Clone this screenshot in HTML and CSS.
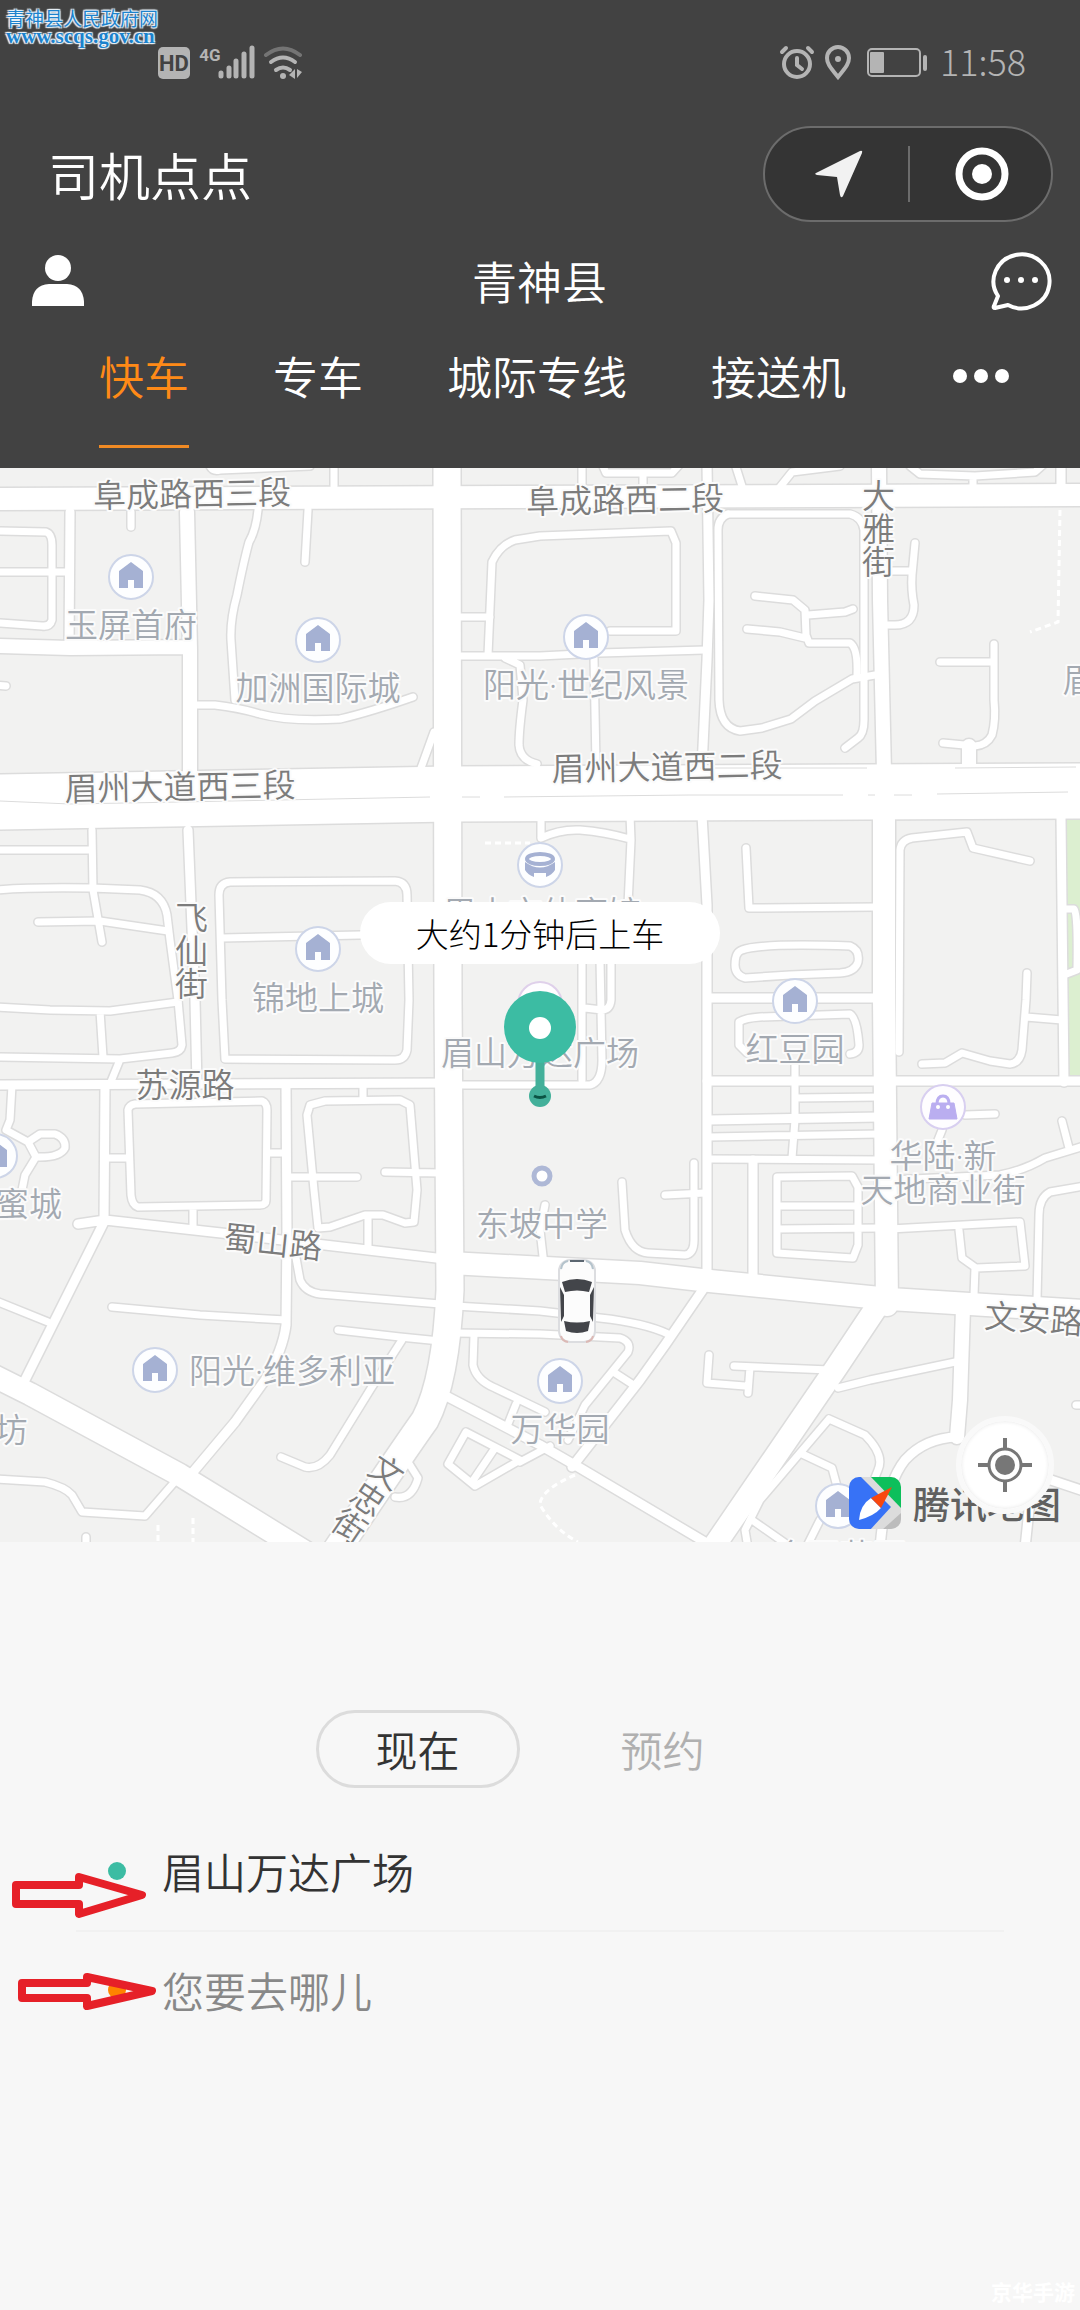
FILE: index.html
```html
<!DOCTYPE html>
<html lang="zh-CN">
<head>
   <meta charset="UTF-8">
   <title>司机点点</title>
   <meta name="viewport" content="width=device-width, initial-scale=1.0">
   <link rel="stylesheet" href="styles.css">
</head>
<body>
   <div class="site-mark">
      <span>青神县人民政府网</span>
      <span class="site-url">www.scqs.gov.cn</span>
   </div>

   <header class="header">
      <div class="status-bar">
         <svg class="status-left" viewBox="0 0 150 36">
            <rect x="2" y="3" width="32" height="32" rx="5" fill="#b4b4b4"/>
            <text class="hd-text" x="18" y="27">HD</text>
            <text class="net-text" x="54" y="17">4G</text>
            <g stroke="#b4b4b4" stroke-width="5" stroke-linecap="round">
               <path d="M65 29v3M73 24v8M80 17v15M88 10v22M96 4v28"/>
            </g>
            <g fill="none" stroke-width="4" stroke-linecap="round">
               <path d="M110 11q17-13 34 0" stroke="#747474"/>
               <path d="M115 18q12-9 24 0M120 26q7-5 14 0" stroke="#b4b4b4"/>
            </g>
            <circle cx="127" cy="32" r="3" fill="#b4b4b4"/>
            <path d="M133 31l6-6v10zM141 25l5 3-5 6z" fill="#b4b4b4"/>
         </svg>
         <div class="status-right">
            <svg class="status-icons" viewBox="0 0 152 36">
               <g fill="none" stroke="#b4b4b4" stroke-linecap="round">
                  <circle cx="19" cy="20" r="13" stroke-width="4"/>
                  <path d="M19 14v7l5 4M4 8l4-4M30 4l4 4" stroke-width="4"/>
                  <path d="M60 33C51 22 49 19 49 14a11 11 0 0 1 22 0c0 5-2 8-11 19z" stroke-width="4"/>
                  <rect x="90" y="5" width="52" height="27" rx="4" stroke-width="2"/>
                  <path d="M147 13v12" stroke-width="4"/>
               </g>
               <circle cx="60" cy="15" r="3" fill="#b4b4b4"/>
               <rect x="92" y="8" width="14" height="21" rx="1" fill="#b4b4b4"/>
            </svg>
            <span class="clock">11:58</span>
         </div>
      </div>

      <div class="title-bar">
         <h1>司机点点</h1>
         <div class="capsule">
            <button type="button" aria-label="导航">
               <svg width="50" height="50" viewBox="0 0 50 50">
                  <path d="M2 24L46 2q3-1 2 2L29 47q-2 3-3-1l-3-18-20-2q-3-1-1-2z" fill="#f2f2f2"/>
               </svg>
            </button>
            <button type="button" aria-label="关闭">
               <svg width="54" height="54" viewBox="0 0 54 54">
                  <circle cx="27" cy="27" r="23" fill="none" stroke="#fff" stroke-width="7"/>
                  <circle cx="27" cy="27" r="10" fill="#fff"/>
               </svg>
            </button>
         </div>
      </div>

      <div class="city-bar">
         <button type="button" aria-label="我的">
            <svg width="52" height="52" viewBox="0 0 52 52">
               <circle cx="26" cy="13" r="13" fill="#fff"/>
               <path d="M0 51q-1-21 17-22h18q18 1 17 22z" fill="#fff"/>
            </svg>
         </button>
         <h2>青神县</h2>
         <button type="button" aria-label="消息">
            <svg width="62" height="62" viewBox="0 0 62 62">
               <path d="M8 46A28 27 0 1 1 18 55L5 58q-2 0-1-2z" fill="none" stroke="#fff" stroke-width="4" stroke-linejoin="round"/>
               <g fill="#fff"><circle cx="17" cy="30" r="3"/><circle cx="31" cy="30" r="3"/><circle cx="45" cy="30" r="3"/></g>
            </svg>
         </button>
      </div>

      <nav class="tabs">
         <button type="button" class="tab active">快车</button>
         <button type="button" class="tab">专车</button>
         <button type="button" class="tab">城际专线</button>
         <button type="button" class="tab">接送机</button>
         <button type="button" class="tab more" aria-label="更多">
            <svg width="58" height="16" viewBox="0 0 58 16" fill="#fff">
               <circle cx="8" cy="8" r="7"/><circle cx="29" cy="8" r="7"/><circle cx="50" cy="8" r="7"/>
            </svg>
         </button>
      </nav>
   </header>

   <main>
      <section class="map">
         <svg class="map-canvas" viewBox="0 468 1080 1074">
            <defs>
               <g id="roads">
                  <!-- lanes and estate roads -->
                  <g class="lane">
                     <path d="M0 531L46 532Q52 534 52 545V620Q50 627 42 626L0 623M0 572H67M131 512V527M-4 685L6 686"/>
                     <path d="M258 510Q256 530 249 542Q244 560 237 595Q230 620 231 640L235 700M308 510L305 562"/>
                     <path d="M197 705L215 705Q240 708 260 714Q290 722 340 719Q370 712 413 697M434 732L421 768"/>
                     <path d="M209 464Q212 472 220 470L310 466M334 468V486"/>
                     <path d="M540 536L515 540Q500 545 492 562L488 655M540 536L671 531L676 543V631H610M461 617H490"/>
                     <path d="M461 656H540L600 653L705 650M505 658L520 665L523 700Q519 730 519 745Q520 760 537 764M594 658L596 765"/>
                     <path d="M728 514H850Q862 517 864 530V720Q864 734 858 738L845 748"/>
                     <path d="M728 514Q718 518 718 530L719 700Q720 728 740 731L762 728L791 719L815 701L852 679L875 675"/>
                     <path d="M755 596L793 600L805 610L806 635L809 643H850Q858 648 857 675M747 629L780 632L805 638M808 615L845 612L853 609"/>
                     <path d="M915 543L912 575Q911 590 914 605Q914 625 895 625H885M888 571H912"/>
                     <path d="M994 644V700Q996 720 992 735Q987 745 975 746L943 743M940 662H994"/>
                     <path d="M582 464V486M602 464L606 473H672L680 464M643 473V487M735 464L742 486M780 487L792 472L840 466"/>
                     <path d="M910 466L920 474L975 476L1035 472L1044 464M973 476V487"/>
                     <path d="M630 815L631 840L628 905M541 838Q560 829 580 830Q605 832 630 839M541 838V818"/>
                     <path d="M746 848L749 908L876 907"/>
                     <path d="M742 950Q760 943 850 946Q860 950 858 962Q855 972 840 973L790 975L745 978Q735 975 735 965Q735 952 742 950z"/>
                     <path d="M747 1053L739 1045V1022Q745 1018 760 1017L850 1014Q857 1018 859 1045Q859 1053 850 1054"/>
                     <path d="M899 1052L900 850Q901 840 912 838L967 832L973 848L1030 861"/>
                     <path d="M1027 973L1026 1000L1022 1050Q1020 1063 1010 1064L990 1061L962 1053L945 1063L922 1064M1026 1017L1062 1020"/>
                     <path d="M1064 909H1074Q1078 912 1077 970L1064 975"/>
                     <path d="M461 1085H590Q602 1082 602 1060L600 960M582 960V1080M611 960V1000Q610 1010 602 1010L585 1008"/>
                     <path d="M795 1098L880 1097M709 1137L880 1134M795 1065V1120L792 1158M709 1159L880 1160"/>
                     <path d="M777 1177L852 1176L858 1187V1245L853 1258L777 1253zM777 1206H858M777 1229L880 1228"/>
                     <path d="M890 1229L1020 1222L1025 1266L976 1268L962 1258L959 1230M975 1268L974 1295"/>
                     <path d="M1084 1186L1050 1192Q1039 1198 1039 1215L1037 1300"/>
                     <path d="M890 1180L1000 1175Q1025 1170 1045 1158L1084 1146M1062 1121L1069 1148M942 1130L932 1155M965 1115L995 1114"/>
                     <path d="M622 1182L625 1230Q632 1252 648 1253L685 1255Q694 1254 694 1240V1163M665 1195L705 1193"/>
                     <path d="M545 1205L540 1230L544 1265"/>
                     <path d="M92 830L93 890L102 942M0 850H92M-4 890Q30 887 92 888L140 890Q163 893 167 915L170 940L178 1000L182 1045Q181 1052 172 1053L120 1059L-4 1057"/>
                     <path d="M38 922L100 921L168 931M-4 1007L50 1010L110 1011L178 1002M100 1011L103 1057M119 1062L110 1084"/>
                     <path d="M222 1000L219 895Q219 883 230 882L395 881Q407 882 407 895L409 1000L407 1050Q405 1060 395 1060L225 1059zM222 938L407 934"/>
                     <path d="M128 1110Q129 1105 135 1104L262 1101Q267 1103 267 1110L266 1200Q266 1205 260 1205L138 1207Q132 1205 131 1195zM106 1158H128M268 1153H286M193 1207V1230"/>
                     <path d="M310 1105L325 1101L400 1100L410 1105L417 1190L414 1222L405 1223L383 1215L365 1215L330 1227L318 1228L314 1190L307 1115zM287 1177H357M385 1172L440 1173M363 1085V1100M368 1216V1250"/>
                     <path d="M296 1244V1258L300 1280Q305 1292 320 1294L440 1304M112 1307L200 1315L286 1320M338 1330L400 1337L440 1341"/>
                     <path d="M402 1340L370 1390L330 1455Q318 1470 305 1467L281 1457M408 1462L418 1478Q412 1500 395 1497"/>
                     <path d="M-4 1479L45 1482Q65 1487 72 1495L82 1512L145 1516L178 1478M86 1537V1548M-4 1301L48 1322"/>
                     <path d="M12 1085L10 1120L6 1130L28 1142L40 1134L55 1134Q66 1138 65 1148Q60 1158 36 1157L28 1142M36 1157L25 1175L22 1190"/>
                     <path d="M455 1306L540 1311L600 1318Q645 1323 668 1334M455 1333L540 1334L620 1338Q632 1342 628 1352L585 1405L568 1440"/>
                     <path d="M474 1335L473 1365Q476 1380 495 1388L545 1412M615 1373L635 1386M508 1424L516 1404"/>
                     <path d="M448 1464L466 1432L520 1460L475 1486zM495 1448L472 1482M520 1462L550 1446"/>
                     <path d="M838 1388L870 1380L960 1361M709 1355L707 1383L745 1386M734 1366L830 1370M750 1367L748 1393"/>
                     <path d="M829 1419L760 1500L745 1530L748 1548M829 1419L865 1435Q885 1455 878 1470L870 1490M800 1453L832 1468L838 1490M752 1520L792 1548M820 1520L806 1548M1076 1405H1090"/>
                  </g>
                  <!-- side streets -->
                  <g class="street">
                     <path d="M70 512L69 646M707 464L709 600L707 660L702 768M188 830L191 904L195 1000L197 1085"/>
                     <path d="M702 815L707 905L707 1000V1285M709 998H880M1061 464V490M1061 818L1064 1082"/>
                     <path d="M-4 1085L450 1083M707 1081H1084M709 1120L880 1117M753 1160V1278"/>
                     <path d="M105 1085L104 1222M78 1224L105 1220L230 1234L445 1259M104 1222L80 1270L22 1386"/>
                     <path d="M286 1085L287 1235L286 1325Q283 1350 265 1380L235 1422L188 1478"/>
                     <path d="M706 1285L665 1345L640 1380L572 1467M448 1397L540 1445L580 1468L715 1548"/>
                     <path d="M957 1437Q925 1438 905 1460Q885 1485 880 1548M1030 1500L1025 1548M1045 1478L1084 1491"/>
                  </g>
                  <g class="avenue">
                     <path d="M187 512L190 650V775M-4 646L70 648L190 647M879 464L880 600L884 772M963 1308L960 1400L957 1437M969 746V770"/>
                  </g>
                  <g class="trunk">
                     <path d="M-4 499L1084 495M884 820V1000L887 1305M450 1263L640 1273L710 1281L890 1299L1084 1311"/>
                     <path d="M-10 1374L30 1394L180 1475L310 1555M878 1305L836 1368L708 1555"/>
                  </g>
                  <path class="artery" d="M447 464L448 1000L450 1290Q446 1380 425 1420Q400 1455 330 1560"/>
                  <path class="highway" d="M-4 802L450 794L1084 791"/>
               </g>
               <g id="home">
                  <circle r="22" fill="#fdfeff" stroke="#cdd5e8" stroke-width="2"/>
                  <path d="M-12 11V-6L0-15L12-6V11H3V3H-3V11z" fill="#a5b1d3"/>
               </g>
            </defs>

            <rect class="land" y="468" width="1080" height="1074"/>
            <rect class="park" x="1066" y="820" width="14" height="258"/>
            <use href="#roads" class="road-edge"/>
            <use href="#roads" class="road-body"/>
            <path class="median" d="M0 801L70 804L180 802L430 797M462 797H480M504 797L690 795L843 795M868 795H875M894 795H912M937 794L1068 792M700 768H867M955 768L1076 767"/>
            <path class="footpath" d="M1060 510L1058 622L1030 632M485 843H530M575 1475Q540 1490 540 1505Q555 1530 578 1542M158 1525V1542M193 1518V1542"/>

            <g class="road-name">
               <text x="192" y="506" transform="rotate(-1 192 494)">阜成路西三段</text>
               <text x="625" y="512" transform="rotate(-1 625 500)">阜成路西二段</text>
               <text class="upright" x="877" y="528">大雅街</text>
               <text x="180" y="799" transform="rotate(-1 180 787)">眉州大道西三段</text>
               <text x="667" y="779" transform="rotate(-1 667 767)">眉州大道西二段</text>
               <text class="upright" x="190" y="950">飞仙街</text>
               <text x="185" y="1097">苏源路</text>
               <text x="273" y="1254" transform="rotate(6 273 1242)">蜀山路</text>
               <text x="1034" y="1331" transform="rotate(4 1034 1319)">文安路</text>
               <text class="upright" x="367" y="1498" transform="rotate(34 367 1498)">文忠街</text>
            </g>
            <g class="place-name">
               <text x="131" y="637">玉屏首府</text>
               <text x="318" y="700">加洲国际城</text>
               <text x="586" y="697">阳光·世纪风景</text>
               <text x="1079" y="692">眉</text>
               <text x="542" y="925">眉山市体育馆</text>
               <text x="318" y="1010">锦地上城</text>
               <text x="540" y="1065">眉山万达广场</text>
               <text x="795" y="1061">红豆园</text>
               <text x="943" y="1168">华陆·新</text>
               <text x="943" y="1202">天地商业街</text>
               <text x="29" y="1216">蜜城</text>
               <text x="542" y="1236">东坡中学</text>
               <text x="292" y="1383">阳光·维多利亚</text>
               <text x="560" y="1441">万华园</text>
               <text x="11" y="1442">坊</text>
               <text x="840" y="1568">金玉花园</text>
            </g>

            <use href="#home" x="131" y="577"/>
            <use href="#home" x="318" y="640"/>
            <use href="#home" x="586" y="637"/>
            <use href="#home" x="318" y="949"/>
            <use href="#home" x="795" y="1001"/>
            <use href="#home" x="-5" y="1156"/>
            <use href="#home" x="155" y="1370"/>
            <use href="#home" x="560" y="1381"/>
            <use href="#home" x="838" y="1506"/>

            <!-- stadium -->
            <g transform="translate(540 865)">
               <circle r="22" fill="#fdfeff" stroke="#cdd5e8" stroke-width="2"/>
               <ellipse cy="-6" rx="13" ry="5" fill="none" stroke="#a5b1d3" stroke-width="4"/>
               <path d="M-15-3Q0 8 15-3V5Q12 10 6 12V8H-6V12Q-12 10-15 5z" fill="#a5b1d3"/>
            </g>
            <!-- mall -->
            <g transform="translate(943 1107)">
               <circle r="22" fill="#fefdff" stroke="#d8cff0" stroke-width="2"/>
               <path d="M-11-4H11L14 12H-14z" fill="#baaef0" stroke="#baaef0" stroke-linejoin="round"/>
               <path d="M-6-3Q-6-11 0-11Q6-11 6-3" fill="none" stroke="#baaef0" stroke-width="3"/>
               <circle cx="-5" cy="0" r="2" fill="#fff"/><circle cx="5" cy="0" r="2" fill="#fff"/>
            </g>
            <circle cx="542" cy="1176" r="8" fill="#fff" stroke="#aeb8d6" stroke-width="5"/>

            <!-- pickup pin -->
            <circle cx="540" cy="1004" r="22" fill="#fefdff" stroke="#dfd0ea" stroke-width="2"/>
            <circle cx="540" cy="1096" r="11" fill="#43b09a"/>
            <path d="M540 1055V1092" stroke="#43b09a" stroke-width="9"/>
            <circle cx="540" cy="1027" r="36" fill="#3cbca3"/>
            <circle cx="540" cy="1028" r="11" fill="#fff"/>
            <path d="M534 1096Q540 1099 546 1096" fill="none" stroke="#0b5444" stroke-width="3"/>

            <!-- car -->
            <g transform="translate(558 1259)">
               <rect x="1" y="1" width="36" height="82" rx="11" fill="#fcfcfc" stroke="#dcdde0" stroke-width="2"/>
               <path d="M12 2H26" stroke="#5b6670" stroke-width="2"/>
               <path d="M3 10Q4 3 10 2M35 10Q34 3 28 2" fill="none" stroke="#b4c3cc" stroke-width="2"/>
               <path d="M3 77Q4 82 10 83M35 77Q34 82 28 83" fill="none" stroke="#dcb9b5" stroke-width="2"/>
               <path d="M4 23Q19 17 34 23L31 33Q19 30 7 33zM6 62Q19 65 32 62L30 72Q19 76 8 72zM2 28L6 36V57L3 63zM36 28L32 36V57L35 63z" fill="#43454a"/>
            </g>
         </svg>

         <div class="callout">大约1分钟后上车</div>

         <div class="map-brand">
            <svg width="54" height="54" viewBox="0 0 54 54">
               <clipPath id="brand-clip"><rect x="1" y="1" width="52" height="52" rx="10"/></clipPath>
               <g clip-path="url(#brand-clip)">
                  <rect width="54" height="54" fill="#dcdcdc"/>
                  <path d="M22 0H54V33z" fill="#0dbf5b"/>
                  <path d="M0 0H12L43 31L22 54H0z" fill="#3772f6"/>
                  <path d="M54 36L34 54H54z" fill="#bcbcbc"/>
               </g>
               <path d="M11 44Q12 29 23 22L33 32Q26 40 11 44z" fill="#fff"/>
               <path d="M44 11L23 22L33 32z" fill="#f8480f"/>
            </svg>
            <span>腾讯地图</span>
         </div>

         <button type="button" class="locate" aria-label="定位">
            <svg width="54" height="54" viewBox="0 0 54 54">
               <circle cx="27" cy="27" r="16" fill="none" stroke="#777" stroke-width="3"/>
               <circle cx="27" cy="27" r="10" fill="#777"/>
               <path d="M27 0V11M27 43V54M0 27H11M43 27H54" stroke="#777" stroke-width="4"/>
            </svg>
         </button>
      </section>

      <form class="trip">
         <div class="when">
            <button type="button" class="when-btn active">现在</button>
            <button type="button" class="when-btn">预约</button>
         </div>
         <div class="trip-row">
            <label class="dot dot-from" for="from" aria-label="上车地点"></label>
            <input type="text" id="from" value="眉山万达广场">
            <svg class="pointer" viewBox="0 0 160 60">
               <path d="M16 44H79V36L142 54L79 73V63H16z"/>
            </svg>
         </div>
         <div class="trip-row">
            <label class="dot dot-to" for="to" aria-label="目的地"></label>
            <input type="text" id="to" placeholder="您要去哪儿">
            <svg class="pointer" viewBox="0 0 160 60">
               <path d="M22 23H87V17L152 31L87 46V38H22z"/>
            </svg>
         </div>
      </form>
   </main>

   <footer class="footer">京华手游</footer>
</body>
</html>
```

FILE: styles.css
```css
* {
   box-sizing: border-box;
}

body {
   margin: 0;
   min-height: 100vh;
   display: flex;
   flex-direction: column;
   background-color: #f7f7f7;
   color: #333;
   font-family: "Noto Sans CJK SC", sans-serif;
   font-weight: 350;
}

button {
   padding: 0;
   border: none;
   background: none;
   color: inherit;
   font: inherit;
   cursor: pointer;
}

svg {
   display: block;
}

h1, h2 {
   margin: 0;
   font-weight: 350;
}

/* site stamp over the top corner */
.site-mark {
   position: absolute;
   top: 8px;
   left: 6px;
   display: flex;
   flex-direction: column;
   color: #1c82cc;
   font-size: 19px;
   font-weight: 400;
   line-height: 20px;
   text-shadow: 0 0 2px #fff, 1px 1px 1px #e4f0f8, -1px -1px 1px #e4f0f8, 1px -1px 1px #e4f0f8, -1px 1px 1px #e4f0f8;
}

.site-url {
   font-family: "Liberation Serif", serif;
   font-size: 21px;
   font-weight: 700;
   line-height: 16px;
}

/* header */
.header {
   background-color: #424242;
   color: #fff;
   padding-top: 44px;
}

.status-bar {
   display: flex;
   justify-content: space-between;
   align-items: center;
   height: 36px;
   padding: 0 54px 0 156px;
   color: #b4b4b4;
}

.status-left {
   width: 150px;
   height: 36px;
}

.hd-text {
   font: 700 22px Roboto, sans-serif;
   fill: #424242;
   text-anchor: middle;
}

.net-text {
   font: 700 17px Roboto, sans-serif;
   fill: #b4b4b4;
   text-anchor: middle;
}

.status-right {
   display: flex;
   align-items: center;
   gap: 10px;
}

.status-icons {
   width: 152px;
   height: 36px;
}

.clock {
   padding-bottom: 4px;
   font-size: 36px;
   font-weight: 300;
   line-height: 36px;
}

.title-bar {
   display: flex;
   justify-content: space-between;
   align-items: center;
   margin-top: 46px;
   padding: 0 27px 0 48px;
}

h1 {
   font-size: 51px;
   line-height: 60px;
}

.capsule {
   display: flex;
   width: 290px;
   height: 96px;
   border: 2px solid #6c6c6c;
   border-radius: 48px;
   background-color: #343434;
}

.capsule button {
   display: flex;
   flex: 1;
   align-items: center;
   justify-content: center;
   padding-left: 4px;
}

.capsule button + button {
   position: relative;
}

.capsule button + button::before {
   content: "";
   position: absolute;
   left: 0;
   top: 18px;
   bottom: 18px;
   width: 2px;
   background-color: #6c6c6c;
}

.city-bar {
   display: flex;
   justify-content: space-between;
   align-items: center;
   height: 62px;
   margin-top: 28px;
   padding: 0 28px 0 32px;
}

h2 {
   padding-left: 5px;
   font-size: 45px;
   line-height: 60px;
}

.tabs {
   display: flex;
   gap: 84px;
   height: 134px;
   margin-top: 22px;
   padding: 0 70px 0 99px;
}

.tab {
   height: 114px;
   padding-bottom: 28px;
   border-bottom: 3px solid transparent;
   font-size: 45px;
   line-height: 60px;
}

.tab.active {
   border-bottom-color: #f08a24;
   color: #ff8a17;
}

.tab.more {
   margin-left: auto;
}

/* map */
.map {
   position: relative;
}

.map-canvas {
   width: 100%;
   height: auto;
}

.land {
   fill: #f2f2f1;
}

.park {
   fill: #dcefd0;
}

.road-edge {
   --edge: 3px;
   stroke: #dcdcdc;
}

.road-body {
   --edge: 0px;
   stroke: #fff;
}

#roads {
   fill: none;
   stroke-linecap: round;
   stroke-linejoin: round;
}

.lane {
   stroke-width: calc(7px + var(--edge));
}

.street {
   stroke-width: calc(9px + var(--edge));
}

.avenue {
   stroke-width: calc(14px + var(--edge));
}

.trunk {
   stroke-width: calc(22px + var(--edge));
}

.artery {
   stroke-width: calc(27px + var(--edge));
}

.highway {
   stroke-width: calc(55px + var(--edge));
}

.median {
   fill: none;
   stroke: #dcdcdc;
   stroke-width: 1px;
}

.footpath {
   fill: none;
   stroke: #fff;
   stroke-width: 3px;
   stroke-dasharray: 6 4;
}

.road-name, .place-name {
   font-family: "Noto Sans", "Noto Sans CJK SC", sans-serif;
   font-size: 33px;
   text-anchor: middle;
   stroke: #fbfbfb;
   stroke-width: 4px;
   stroke-linejoin: round;
   paint-order: stroke;
}

.road-name {
   fill: #7c7c7c;
}

.place-name {
   fill: #a3a9b1;
}

.upright {
   writing-mode: vertical-rl;
}

.callout {
   position: absolute;
   top: 434px;
   left: 50%;
   transform: translateX(-50%);
   width: 360px;
   border-radius: 31px;
   background-color: #fff;
   color: #000;
   font-size: 33px;
   font-weight: 300;
   line-height: 62px;
   text-align: center;
}

.map-brand {
   position: absolute;
   right: 19px;
   bottom: 12px;
   display: flex;
   align-items: center;
   gap: 11px;
   color: #606060;
   font-size: 37px;
   font-weight: 500;
   line-height: 54px;
}

.locate {
   position: absolute;
   right: 26px;
   bottom: 28px;
   display: flex;
   align-items: center;
   justify-content: center;
   width: 98px;
   height: 98px;
   border: 5px solid #f9f9f9;
   border-radius: 50%;
   background-color: #fff;
   box-shadow: inset 0 0 4px #e4e4e4;
}

/* trip form */
.trip {
   padding: 168px 76px 0;
}

.when {
   display: flex;
   justify-content: center;
   gap: 41px;
   margin-bottom: 24px;
}

.when-btn {
   width: 204px;
   height: 78px;
   border: 3px solid transparent;
   border-radius: 39px;
   color: #b0b0b0;
   font-size: 42px;
   line-height: 60px;
}

.when-btn.active {
   border-color: #dcdcdc;
   color: #333;
}

.trip-row {
   position: relative;
   display: flex;
   align-items: center;
   gap: 36px;
   height: 118px;
   padding-left: 32px;
}

.trip-row + .trip-row {
   border-top: 2px solid #f1f1f1;
}

.dot {
   width: 18px;
   height: 18px;
   border-radius: 50%;
}

.dot-from {
   background-color: #3cbca3;
}

.dot-to {
   background-color: #ff8400;
}

.trip-row input {
   flex: 1;
   min-width: 0;
   padding: 0;
   border: none;
   background: none;
   color: #333;
   font: inherit;
   font-size: 42px;
   line-height: 60px;
}

.trip-row input::placeholder {
   color: #888;
   opacity: 1;
}

/* hand-drawn arrows over the two inputs */
.pointer {
   position: absolute;
   top: 50%;
   left: -76px;
   width: 160px;
   height: 60px;
   margin-top: -30px;
   overflow: visible;
   fill: none;
   stroke: #e62028;
   stroke-width: 8px;
   stroke-linejoin: round;
   pointer-events: none;
}

.footer {
   margin-top: auto;
   padding: 0 5px 4px;
   color: #fff;
   font-size: 21px;
   font-weight: 700;
   line-height: 30px;
   text-align: right;
}
```
